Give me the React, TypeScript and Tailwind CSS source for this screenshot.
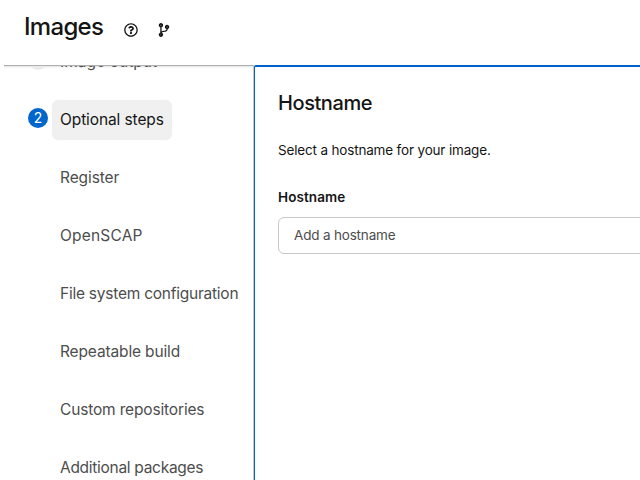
import React from 'react';
import { FaRegQuestionCircle, FaCodeBranch } from 'react-icons/fa';

const steps = [
  { label: 'Image output', badge: '1', tracking: 'tracking-[0.05px]' },
  { label: 'Optional steps', badge: '2', current: true, tracking: 'tracking-[-0.1px]' },
  { label: 'Register', tracking: 'tracking-[-0.09px]' },
  { label: 'OpenSCAP', tracking: 'tracking-[0.19px]' },
  { label: 'File system configuration', tracking: 'tracking-[-0.24px]' },
  { label: 'Repeatable build', tracking: 'tracking-[-0.14px]' },
  { label: 'Custom repositories', tracking: 'tracking-[-0.16px]' },
  { label: 'Additional packages', tracking: 'tracking-[-0.29px]' },
];

function Header() {
  return (
    <header className="flex h-[65px] shrink-0 items-start bg-white pl-6 pt-[11px]">
      <h1 className="w-[99px] whitespace-nowrap text-[24px] font-medium leading-[32px] tracking-[-0.7px]">Images</h1>
      <FaRegQuestionCircle className="ml-[1px] mt-[12px] size-[14px]" />
      <FaCodeBranch className="ml-[19px] mt-[12px] size-[14px]" />
    </header>
  );
}

function Step({ label, badge, current, tracking }: { label: string; badge?: string; current?: boolean; tracking: string }) {
  return (
    <li className="flex h-10 items-start">
      <span className="flex w-6 shrink-0 pt-2">
        {badge && (
          <span className={`flex size-5 items-center justify-center rounded-full text-[14px] leading-5 ${current ? 'bg-[#0066cc] text-white' : 'bg-[#ebebeb] text-[#151515]'}`}>
            {badge}
          </span>
        )}
      </span>
      <button className={`h-10 whitespace-nowrap rounded-[6px] px-2 text-left text-[15.5px] leading-[38px] ${tracking} ${current ? 'w-[120px] bg-[#f0f0f0] text-[#151515]' : 'text-[#4d4d4d]'}`}>
        {label}
      </button>
    </li>
  );
}

export default function App() {
  return (
    <div className="flex h-[480px] w-[640px] flex-col overflow-hidden bg-white font-['Inter',sans-serif] text-[#151515]">
      <Header />
      <div className="flex min-h-0 flex-1">
        <nav className="ml-1 w-[250px] shrink-0 overflow-hidden border-r border-t border-r-[#c7c7c7] border-t-[#b0b0b0] pl-6 shadow-[inset_0_2px_2px_-1px_rgba(0,0,0,0.12)]">
          <ol className="-mt-6 flex flex-col gap-[18px]">
            {steps.map((step) => (
              <Step key={step.label} {...step} />
            ))}
          </ol>
        </nav>
        <main className="min-w-0 flex-1 overflow-hidden rounded-tl-[2px] border-l border-t-2 border-[#0060cc] pl-[23px] pt-[22px]">
          <h2 className="text-[20px] font-medium leading-7 tracking-[-0.42px]">Hostname</h2>
          <p className="mt-[23px] text-[13.5px] leading-[21px] tracking-[-0.17px]">Select a hostname for your image.</p>
          <label className="mt-[26px] block text-[13.5px] font-semibold leading-[21px] tracking-[0.08px]" htmlFor="hostname">Hostname</label>
          <input
            id="hostname"
            className="mt-[9px] block h-[37px] w-[400px] rounded-[6px] border border-[#c7c7c7] px-[15px] pb-[1px] text-[13.5px] tracking-[-0.18px] text-[#4d4d4d] placeholder:text-[#4d4d4d]"
            placeholder="Add a hostname"
          />
        </main>
      </div>
    </div>
  );
}
